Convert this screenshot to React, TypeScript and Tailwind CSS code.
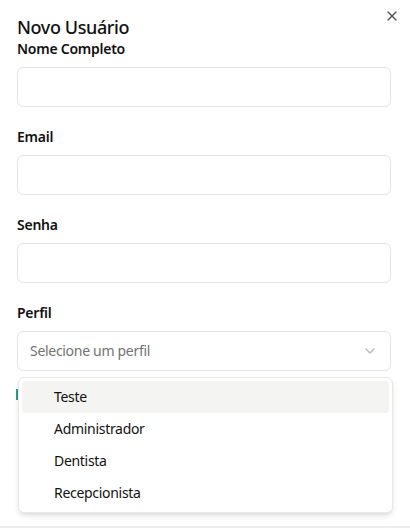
import { X, ChevronDown } from 'lucide-react'

const ROLES = ['Teste', 'Administrador', 'Dentista', 'Recepcionista']

function Field({ label }: { label: string }) {
  return (
    <div>
      <label className="block text-sm leading-5 font-semibold tracking-[-0.25px] text-[#111]">{label}</label>
      <input className="mt-2 h-10 w-full rounded-md border border-[#e4e4e4] bg-white px-3 text-sm outline-none" />
    </div>
  )
}

export default function App() {
  return (
    <div
      className="relative h-[528px] w-[410px] overflow-hidden bg-white"
      style={{ fontFamily: '"Noto Sans", sans-serif' }}
    >
      <div className="pl-[17px] pt-[15px] pr-[19px]">
        <h2 className="text-lg leading-6 font-medium tracking-[-0.4px] text-[#111]">Novo Usuário</h2>

        <div className="space-y-5">
          <Field label="Nome Completo" />
          <Field label="Email" />
          <Field label="Senha" />

          <div>
            <label className="block text-sm leading-5 font-semibold tracking-[-0.25px] text-[#111]">Perfil</label>
            <button className="mt-2 flex h-10 w-full items-center justify-between rounded-md border border-[#e4e4e4] bg-white pl-3 pr-3 text-sm tracking-[-0.3px] text-[#737373]">
              <span>Selecione um perfil</span>
              <ChevronDown size={16} className="opacity-50" />
            </button>
          </div>
        </div>
      </div>

      {/* close */}
      <button className="absolute top-[8px] right-[10px] text-[#555]">
        <X size={16} />
      </button>

      {/* switch peeking out behind the menu */}
      <div className="absolute left-[16px] top-[389px] h-[11px] w-[2px] bg-[#2a9d8f]" />

      {/* select menu */}
      <div className="absolute left-[18px] top-[377px] w-[375px] rounded-md border border-[#e8e8e8] bg-white p-[3px] shadow-md">
        {ROLES.map((r, i) => (
          <div
            key={r}
            className={`flex h-8 items-center rounded-sm pl-[32px] text-sm tracking-[-0.3px] text-[#111] ${i === 0 ? 'bg-[#f4f4f2]' : ''}`}
          >
            {r}
          </div>
        ))}
      </div>

      <div className="absolute bottom-0 left-0 h-[2px] w-full bg-[#ececec]" />
    </div>
  )
}
